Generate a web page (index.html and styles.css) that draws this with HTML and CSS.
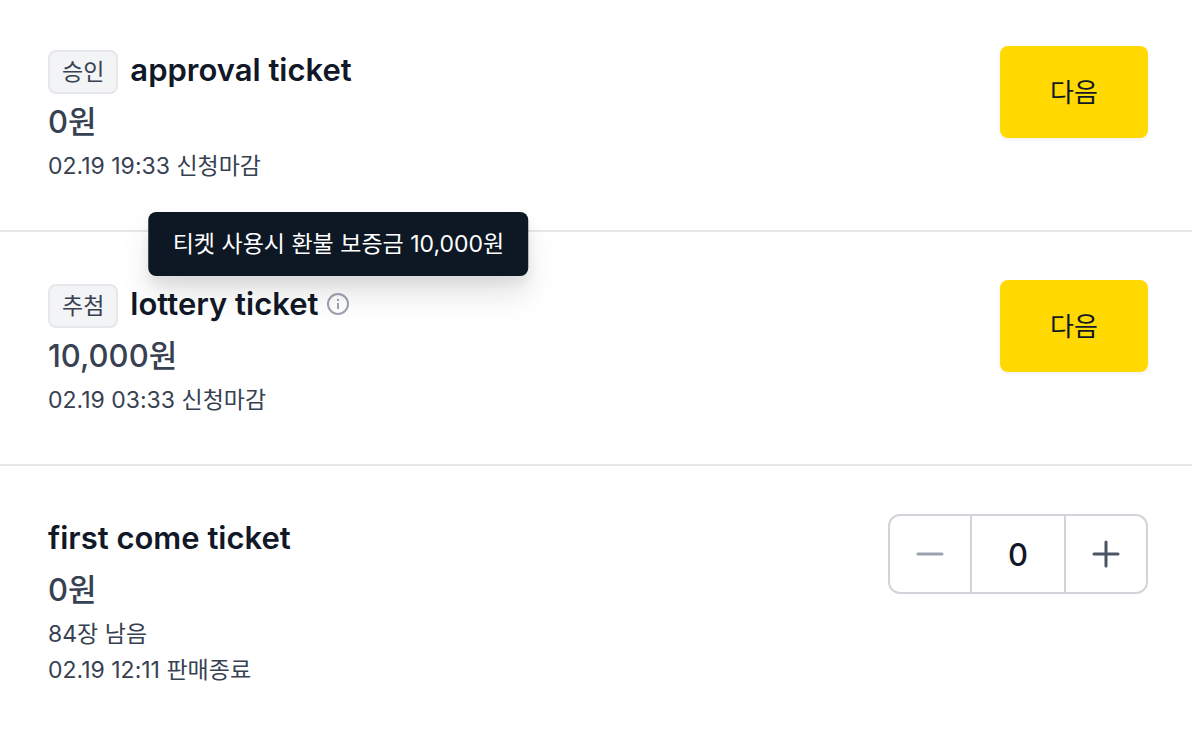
FILE: index.html
```html
<!DOCTYPE html>
<html lang="ko">
<head>
  <meta charset="UTF-8">
  <meta name="viewport" content="width=device-width, initial-scale=1.0">
  <title>티켓 선택</title>
  <link rel="stylesheet" href="styles.css">
</head>
<body>
  <main>
    <ul class="ticket-list">
      <li class="ticket">
        <div class="ticket-info">
          <div class="ticket-head">
            <span class="badge">승인</span>
            <h2 class="ticket-name">approval ticket</h2>
          </div>
          <p class="price">0원</p>
          <p class="meta">02.19 19:33 신청마감</p>
        </div>
        <button type="button" class="next-btn">다음</button>
      </li>

      <li class="ticket">
        <div class="ticket-info">
          <div class="ticket-head">
            <span class="badge">추첨</span>
            <h2 class="ticket-name">lottery ticket</h2>
            <div class="info">
              <button type="button" class="info-btn" aria-label="보증금 안내" aria-describedby="depositTip">
                <svg viewBox="0 0 24 24" width="24" height="24" fill="none" stroke="currentColor" stroke-width="2">
                  <circle cx="12" cy="12" r="10"/>
                  <path d="M12 11v6M12 7v2"/>
                </svg>
              </button>
              <div id="depositTip" class="tooltip" role="tooltip">티켓 사용시 환불 보증금 10,000원</div>
            </div>
          </div>
          <p class="price">10,000원</p>
          <p class="meta">02.19 03:33 신청마감</p>
        </div>
        <button type="button" class="next-btn">다음</button>
      </li>

      <li class="ticket">
        <div class="ticket-info">
          <div class="ticket-head">
            <h2 class="ticket-name">first come ticket</h2>
          </div>
          <p class="price">0원</p>
          <p class="meta">84장 남음</p>
          <p class="meta">02.19 12:11 판매종료</p>
        </div>
        <div class="counter">
          <button type="button" class="step-btn" aria-label="수량 감소" disabled>
            <svg viewBox="0 0 32 32" width="32" height="32" fill="none" stroke="currentColor" stroke-width="3" stroke-linecap="round">
              <path d="M4 16h24"/>
            </svg>
          </button>
          <input type="text" class="count" aria-label="수량" inputmode="numeric" value="0">
          <button type="button" class="step-btn" aria-label="수량 증가">
            <svg viewBox="0 0 32 32" width="32" height="32" fill="none" stroke="currentColor" stroke-width="3" stroke-linecap="round">
              <path d="M4 16h24M16 4v24"/>
            </svg>
          </button>
        </div>
      </li>
    </ul>
  </main>
</body>
</html>
```
FILE: styles.css
```css
* {
  box-sizing: border-box;
}

body {
  margin: 0;
  background-color: #fff;
  color: #111827;
  font-family: Inter, "Noto Sans CJK KR", sans-serif;
}

button,
input {
  font-family: inherit;
}

.ticket-list {
  list-style: none;
  margin: 0;
  padding: 0;
}

.ticket {
  display: flex;
  justify-content: space-between;
  align-items: flex-start;
  padding: 48px 44px 46px 48px;
  border-bottom: 2px solid #e5e7eb;
}

.ticket:first-child {
  padding-top: 46px;
}

.ticket:last-child {
  border-bottom: none;
}

.ticket-head {
  display: flex;
  align-items: center;
  height: 52px;
}

.badge {
  height: 44px;
  margin-right: 12px;
  padding: 0 12px;
  border: 2px solid #e5e7eb;
  border-radius: 8px;
  background-color: #f3f4f6;
  color: #374151;
  font-size: 23px;
  line-height: 40px;
}

.ticket-name {
  margin: 0;
  padding-bottom: 4px;
  font-size: 31px;
  font-weight: 600;
  line-height: 48px;
}

.price {
  margin: 0 0 2px;
  color: #374151;
  font-size: 31px;
  font-weight: 500;
  line-height: 48px;
}

.meta {
  margin: 0;
  color: #374151;
  font-size: 23px;
  line-height: 36px;
}

.info {
  position: relative;
  margin-left: 8px;
  padding-bottom: 4px;
}

.info-btn {
  display: flex;
  padding: 0;
  border: none;
  background: none;
  color: #9ca3af;
  cursor: pointer;
}

.tooltip {
  position: absolute;
  bottom: 44px;
  left: 50%;
  transform: translateX(-50%);
  padding: 0 24px;
  border-radius: 8px;
  background-color: #0e1825;
  color: #fff;
  font-size: 23px;
  line-height: 64px;
  white-space: nowrap;
  box-shadow: 0 20px 30px rgba(0, 0, 0, 0.1), 0 8px 12px rgba(0, 0, 0, 0.06);
}

.next-btn {
  width: 148px;
  height: 92px;
  padding: 0 0 4px;
  border: none;
  border-radius: 8px;
  background-color: #ffd900;
  color: #111827;
  font-size: 26px;
  cursor: pointer;
  box-shadow: 0 2px 4px rgba(0, 0, 0, 0.06);
}

.counter {
  display: flex;
  height: 80px;
  border: 2px solid #d1d5db;
  border-radius: 12px;
}

.step-btn {
  display: flex;
  align-items: center;
  justify-content: center;
  width: 80px;
  padding: 0;
  border: none;
  background: none;
  color: #4b5563;
  cursor: pointer;
}

.step-btn:disabled {
  color: #9ca3af;
}

.count {
  width: 96px;
  padding: 0;
  border: solid #d1d5db;
  border-width: 0 2px;
  background: none;
  color: #111827;
  font-size: 31px;
  font-weight: 500;
  text-align: center;
}
```
